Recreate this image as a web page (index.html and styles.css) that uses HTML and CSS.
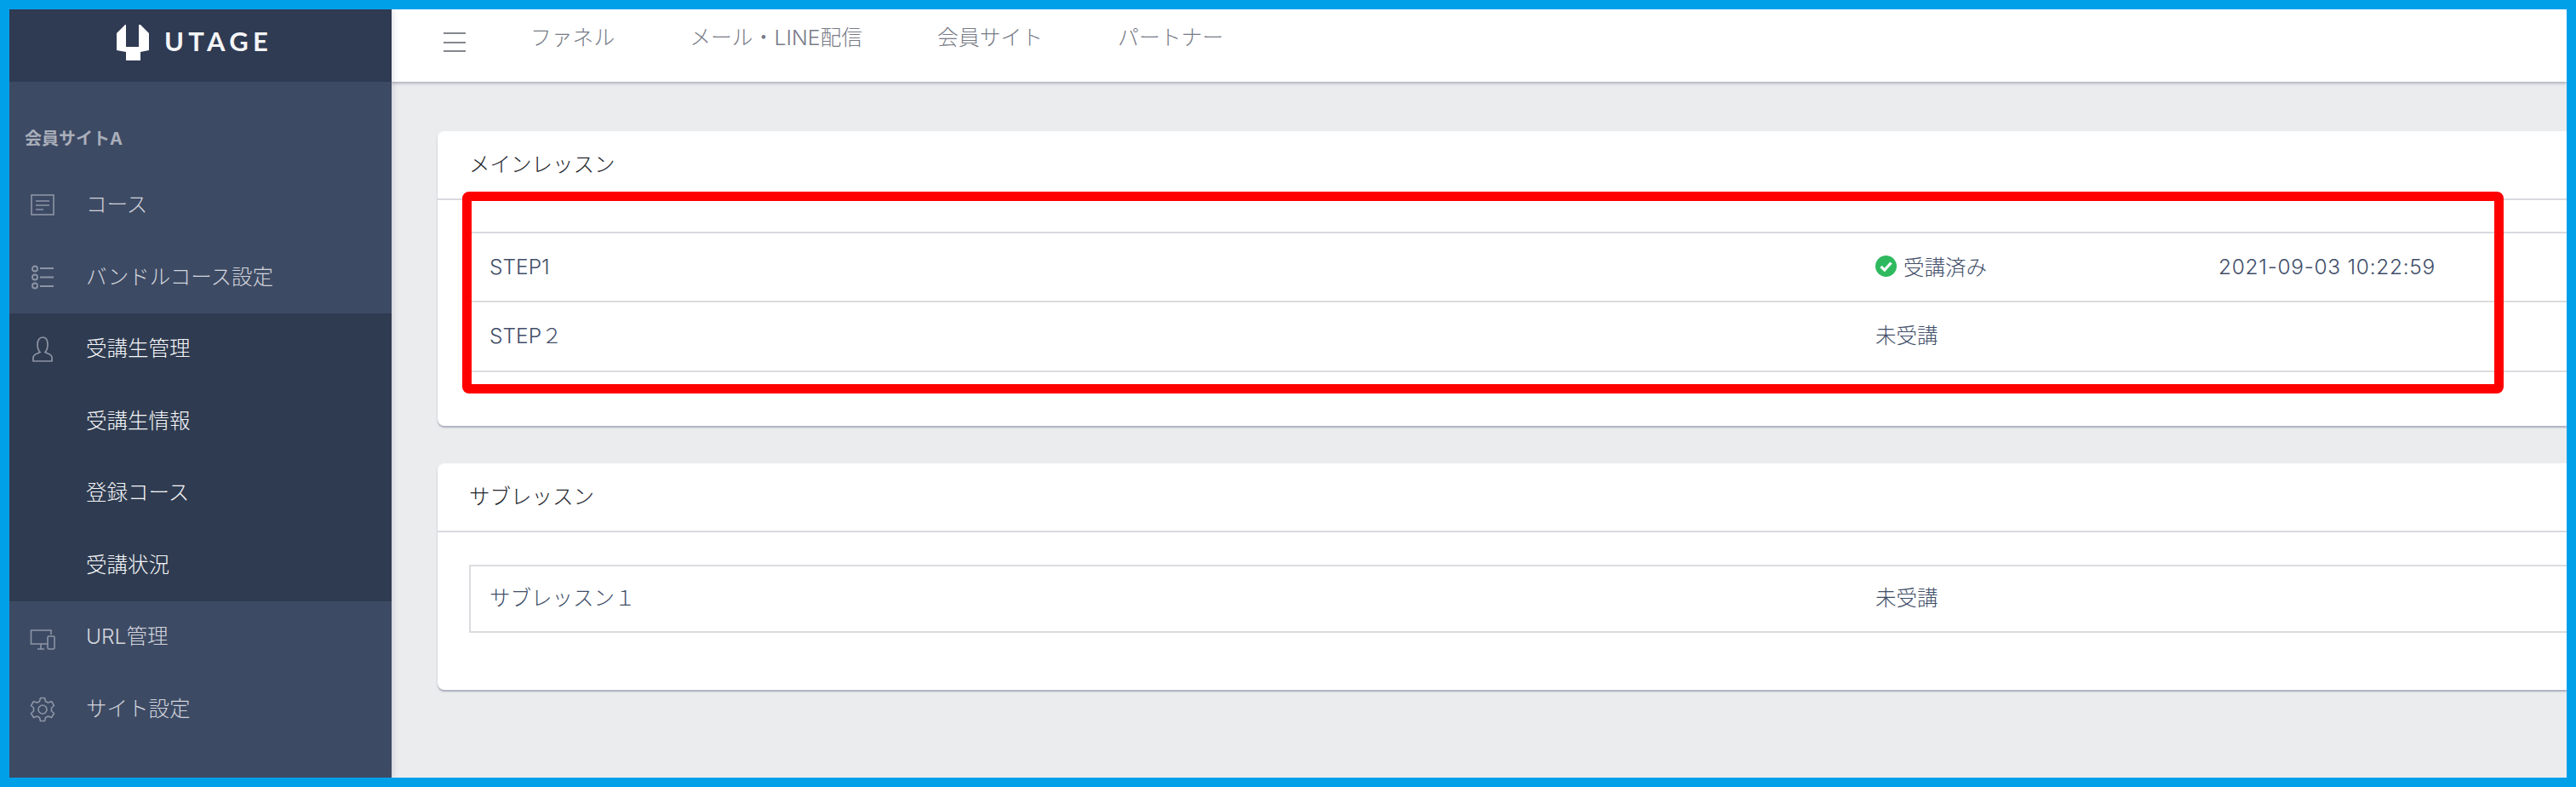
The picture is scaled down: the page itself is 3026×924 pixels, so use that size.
FILE: index.html
```html
<!DOCTYPE html>
<html lang="ja">
  <head>
    <meta charset="UTF-8" />
    <meta name="viewport" content="width=device-width, initial-scale=1.0" />
    <title>UTAGE</title>
    <link rel="stylesheet" href="styles.css">
  </head>
  <body>
    <div class="frame">
      <aside class="sidebar">
        <div class="brand">
          <svg class="brand-mark" viewBox="0 0 38 42" width="38" height="42">
            <path fill="#fff" d="M10 0 L11 0 L11 26 L26 26 L26 0 L28 0 L38 10 L38 30 L28 32 L28 42 L11 42 L11 32 L0 30 L0 10 Z" />
          </svg>
          <span class="brand-name">UTAGE</span>
        </div>
        <div class="side-title">会員サイトA</div>
        <nav>
          <a class="side-item">
            <svg class="side-icon" viewBox="0 0 30 30" width="30" height="30" fill="none" stroke="currentColor" stroke-width="1.6">
              <rect x="2" y="3" width="26" height="23" />
              <path d="M7 10 H23 M7 15 H23 M7 20 H16" />
            </svg>
            コース
          </a>
          <a class="side-item">
            <svg class="side-icon" viewBox="0 0 30 30" width="30" height="30" fill="none" stroke="currentColor" stroke-width="1.8">
              <circle cx="6" cy="4.5" r="3" />
              <circle cx="6" cy="14.5" r="3" />
              <circle cx="6" cy="24.5" r="3" />
              <path d="M12 4 H28 M12 14.500 H28 M12 25 H28" />
            </svg>
            バンドルコース設定
          </a>
          <div class="side-group">
            <a class="side-item">
              <svg class="side-icon" viewBox="0 0 30 30" width="30" height="30" fill="none" stroke="currentColor" stroke-width="1.7">
                <path d="M4 29 V25 C4 22 6 21 9 20 L12 18.500 C10 16.500 9 13.500 9 9.500 C9 4 11.500 1 15 1 C18.500 1 21 4 21 9.500 C21 13.500 20 16.500 18 18.500 L21 20 C24 21 26 22 26 25 V29 Z" />
              </svg>
              受講生管理
            </a>
            <a class="side-item">受講生情報</a>
            <a class="side-item">登録コース</a>
            <a class="side-item">受講状況</a>
          </div>
          <a class="side-item">
            <svg class="side-icon" viewBox="0 0 30 30" width="30" height="30" fill="none" stroke="currentColor" stroke-width="1.6">
              <path d="M21 23 H1.500 V7 H25 V12" />
              <path d="M9 29 H17 M13 23 V29" />
              <rect x="21" y="14" width="8" height="15" rx="1.500" />
            </svg>
            URL管理
          </a>
          <a class="side-item">
            <svg class="side-icon" viewBox="0 0 30 30" width="30" height="30" fill="none" stroke="currentColor" stroke-width="1.6">
              <circle cx="15" cy="15" r="5" />
              <path d="M12.500 1.500 H17.500 L18.500 5.500 L21.500 7 L25.500 5.500 L28.500 10.500 L25.500 13 V17 L28.500 19.500 L25.500 24.500 L21.500 23 L18.500 24.500 L17.500 28.500 H12.500 L11.500 24.500 L8.500 23 L4.500 24.500 L1.500 19.500 L4.500 17 V13 L1.500 10.500 L4.500 5.500 L8.500 7 L11.500 5.500 Z" stroke-linejoin="round" />
            </svg>
            サイト設定
          </a>
        </nav>
      </aside>

      <div class="content">
        <header class="topbar">
          <div class="burger"><span></span><span></span><span></span></div>
          <a class="top-link">ファネル</a>
          <a class="top-link">メール・LINE配信</a>
          <a class="top-link">会員サイト</a>
          <a class="top-link">パートナー</a>
        </header>

        <main class="main">
          <section class="card card-main">
            <h2 class="card-title">メインレッスン</h2>
            <div class="lesson-table">
              <div class="lesson-row lesson-head"></div>
              <div class="lesson-row">
                <div>STEP1</div>
                <div class="status">
                  <svg viewBox="0 0 25 25" width="25" height="25">
                    <circle cx="12.500" cy="12.500" r="12.500" fill="#2fb95f" />
                    <path d="M6.500 13 L10.800 17 L18.500 8.500" fill="none" stroke="#fff" stroke-width="3.200" />
                  </svg>
                  受講済み
                </div>
                <div class="stamp">2021-09-03 10:22:59</div>
              </div>
              <div class="lesson-row">
                <div>STEP２</div>
                <div class="status">未受講</div>
                <div></div>
              </div>
            </div>
            <div class="marker"></div>
          </section>

          <section class="card card-sub">
            <h2 class="card-title">サブレッスン</h2>
            <div class="lesson-table boxed">
              <div class="lesson-row">
                <div>サブレッスン１</div>
                <div class="status">未受講</div>
                <div></div>
              </div>
            </div>
          </section>
        </main>
      </div>
    </div>
  </body>
</html>
```

FILE: styles.css
```css
* {
  box-sizing: border-box;
}

html,
body {
  height: 100%;
}

body {
  margin: 0;
  font-family: Inter, "Noto Sans CJK JP", sans-serif;
  font-size: 24.5px;
  font-weight: 300;
  background-color: #ebecee;
  overflow: hidden;
}

.frame {
  display: flex;
  height: 100%;
  border: 11px solid #00a0e9;
  overflow: hidden;
}

/* sidebar */
.sidebar {
  width: 449px;
  flex-shrink: 0;
  background-color: #3d4a64;
  position: relative;
  z-index: 2;
  box-shadow: 2px 0 6px rgba(90, 100, 120, 0.2);
}

.brand {
  height: 85px;
  background-color: #2f3a53;
  display: flex;
  align-items: center;
  padding-left: 126px;
  gap: 18px;
}

.brand-mark {
  margin-top: -8px;
}

.brand-name {
  color: #f4f5f7;
  font-family: Lato, sans-serif;
  font-weight: 700;
  font-size: 31px;
  letter-spacing: 5.3px;
  margin-top: -12px;
}

.side-title {
  height: 103px;
  padding: 52px 0 0 18px;
  color: #a9aeba;
  font-size: 20px;
  font-weight: 700;
  line-height: 30px;
}

.side-item {
  height: 84.5px;
  display: flex;
  align-items: center;
  padding: 0 0 5px 90px;
  position: relative;
  color: #d2d5dc;
}

.side-group {
  background-color: #2f3b50;
}

.side-group .side-item {
  color: #f6f7f9;
}

.side-icon {
  position: absolute;
  left: 24px;
  top: 27px;
  color: #8d95a5;
}

/* top bar */
.content {
  flex: 1;
  min-width: 0;
}

.topbar {
  height: 85px;
  background-color: #fff;
  display: flex;
  align-items: flex-start;
  padding: 16px 0 0 61px;
  color: #787b87;
  font-size: 24.8px;
  box-shadow: 0 2px 3px rgba(120, 130, 150, 0.55);
  position: relative;
  z-index: 1;
}

.burger {
  width: 26px;
  margin: 11px 31px 0 0;
  display: flex;
  flex-direction: column;
  gap: 8.500px;
}

.burger span {
  height: 2px;
  background-color: #85878f;
}

.top-link {
  padding: 0 44px;
  line-height: 34px;
}

.top-link:first-of-type {
  padding-left: 45px;
}

.main {
  padding: 58px 0 0 54px;
}

/* cards */
.card {
  background-color: #fff;
  border-radius: 8px 0 0 8px;
  box-shadow: 0 2px 2px rgba(120, 132, 155, 0.6);
  margin-bottom: 44px;
  position: relative;
}

.card-main {
  height: 346px;
}

.card-sub {
  height: 266px;
}

.card-title {
  margin: 0;
  height: 81px;
  padding: 21px 0 0 37px;
  font-size: 24.5px;
  font-weight: 300;
  line-height: 36px;
  color: #23262c;
  border-bottom: 2px solid #d9dae0;
}

.lesson-table {
  margin-left: 37px;
  color: #414e69;
}

.lesson-table.boxed {
  margin-top: 38px;
  border: 2px solid #dcdce0;
  border-right: 0;
}

.lesson-row {
  display: grid;
  grid-template-columns: 1652px 403px 1fr;
  height: 81px;
  align-items: center;
  padding-bottom: 1px;
  border-bottom: 2px solid #dcdce0;
}

.lesson-row > div:first-child {
  padding-left: 24px;
}

.lesson-head {
  height: 38.500px;
  padding: 0;
  border-bottom-color: #d9dae0;
}

.lesson-row + .lesson-row + .lesson-row {
  height: 82px;
  padding-bottom: 4px;
}

.boxed .lesson-row {
  grid-template-columns: 1650px 403px 1fr;
  height: 76px;
  padding-bottom: 6px;
  border-bottom: 0;
}

.boxed .lesson-row > div:first-child {
  padding-left: 22px;
}

.status {
  display: flex;
  align-items: center;
  gap: 8px;
}

.stamp {
  letter-spacing: 0.7px;
}

/* red annotation box */
.marker {
  position: absolute;
  left: 29px;
  top: 71px;
  width: 2398px;
  height: 237px;
  border: 11px solid #ff0000;
  border-radius: 8px;
}
```
